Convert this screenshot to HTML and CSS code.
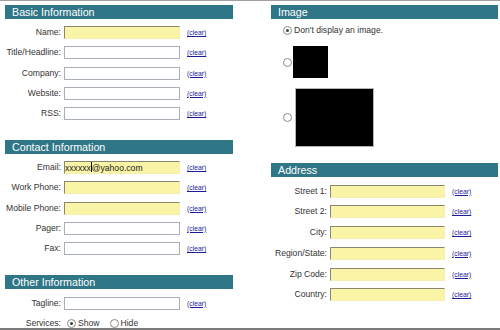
FILE: index.html
```html
<!DOCTYPE html>
<html>
<head>
<meta charset="utf-8">
<title>Edit Profile</title>
<link rel="stylesheet" href="styles.css">
</head>
<body>
<div class="page">
	<div class="col col-left">
		<div class="section">
			<div class="bar">Basic Information</div>
			<div class="fields">
				<span class="lbl">Name:</span><span class="field hl"></span><a class="clear" href="#">(clear)</a>
				<span class="lbl">Title/Headline:</span><span class="field"></span><a class="clear" href="#">(clear)</a>
				<span class="lbl">Company:</span><span class="field"></span><a class="clear" href="#">(clear)</a>
				<span class="lbl">Website:</span><span class="field"></span><a class="clear" href="#">(clear)</a>
				<span class="lbl">RSS:</span><span class="field"></span><a class="clear" href="#">(clear)</a>
			</div>
		</div>
		<div class="section next">
			<div class="bar">Contact Information</div>
			<div class="fields">
				<span class="lbl">Email:</span><span class="field hl">xxxxxx<span class="caret"></span>@yahoo.com</span><a class="clear" href="#">(clear)</a>
				<span class="lbl">Work Phone:</span><span class="field hl"></span><a class="clear" href="#">(clear)</a>
				<span class="lbl">Mobile Phone:</span><span class="field hl"></span><a class="clear" href="#">(clear)</a>
				<span class="lbl">Pager:</span><span class="field"></span><a class="clear" href="#">(clear)</a>
				<span class="lbl">Fax:</span><span class="field"></span><a class="clear" href="#">(clear)</a>
			</div>
		</div>
		<div class="section next">
			<div class="bar">Other Information</div>
			<div class="fields tight">
				<span class="lbl">Tagline:</span><span class="field"></span><a class="clear" href="#">(clear)</a>
				<span class="lbl">Services:</span>
				<span class="choices">
					<span class="radio on"></span><span class="choice">Show</span>
					<span class="radio"></span><span class="choice">Hide</span>
				</span>
			</div>
		</div>
	</div>
	<div class="col col-right">
		<div class="section">
			<div class="bar">Image</div>
			<div class="opt opt-none"><span class="radio on"></span><span class="choice">Don't display an image.</span></div>
			<div class="opt opt-small"><span class="radio"></span><span class="pic pic-small"></span></div>
			<div class="opt opt-large"><span class="radio"></span><span class="pic pic-large"></span></div>
		</div>
		<div class="section address">
			<div class="bar">Address</div>
			<div class="fields wide">
				<span class="lbl">Street 1:</span><span class="field hl"></span><a class="clear" href="#">(clear)</a>
				<span class="lbl">Street 2:</span><span class="field hl"></span><a class="clear" href="#">(clear)</a>
				<span class="lbl">City:</span><span class="field hl"></span><a class="clear" href="#">(clear)</a>
				<span class="lbl">Region/State:</span><span class="field hl"></span><a class="clear" href="#">(clear)</a>
				<span class="lbl">Zip Code:</span><span class="field hl"></span><a class="clear" href="#">(clear)</a>
				<span class="lbl">Country:</span><span class="field hl"></span><a class="clear" href="#">(clear)</a>
			</div>
		</div>
	</div>
</div>
</body>
</html>
```
FILE: styles.css
```css
body {
	margin: 0;
	background-color: #fff;
	font-family: "Liberation Sans", Arial, Helvetica, sans-serif;
	font-size: 8.6px;
	color: #333;
}

.page {
	display: flex;
	box-sizing: border-box;
	height: 330px;
	padding: 4px 0 0 5px;
	border-top: 1px solid #a0a0a0;
	border-bottom: 2px solid #7a7a7a;
}

.col-left {
	width: 228px;
}

.col-right {
	width: 227px;
	margin-left: 38px;
}

.bar {
	height: 14px;
	line-height: 14px;
	padding-left: 7px;
	background-color: #2f7686;
	color: #fff;
	font-size: 10.7px;
}

.section.next {
	margin-top: 20px;
}

/* label / input / clear rows */
.fields {
	display: grid;
	grid-template-columns: 56px 116px 1fr;
	column-gap: 3px;
	row-gap: 7.25px;
	align-items: center;
	margin-top: 7px;
}

.fields.tight {
	margin-top: 7.5px;
	row-gap: 7px;
}

.fields.wide {
	grid-template-columns: 56px 115px 1fr;
	row-gap: 7.8px;
	margin-top: 7.5px;
}

.lbl {
	text-align: right;
	white-space: nowrap;
	line-height: 13px;
}

.field {
	display: block;
	box-sizing: border-box;
	height: 13px;
	line-height: 12px;
	border: 1px solid #a8afb8;
	background-color: #fff;
	color: #222;
	white-space: nowrap;
	overflow: hidden;
}

.field.hl {
	background-color: #faf5a6;
	border-color: #8a8770 #f4efb0 #f4efb0 #8a8770;
}

.caret {
	display: inline-block;
	width: 1px;
	height: 10px;
	vertical-align: -1px;
	background-color: #000;
}

.clear {
	margin-left: 4px;
	font-size: 6.8px;
	color: #1c1c9a;
}

.choices {
	display: flex;
	align-items: center;
	grid-column: 2 / 4;
	padding-left: 3px;
}

.choice {
	margin-left: 2px;
}

.choices .choice {
	margin-right: 10px;
}

.radio {
	position: relative;
	flex: none;
	box-sizing: border-box;
	width: 9px;
	height: 9px;
	border: 1px solid #8c8c8c;
	border-radius: 50%;
	background-color: #fff;
}

.radio.on::after {
	content: "";
	position: absolute;
	left: 2px;
	top: 2px;
	width: 3px;
	height: 3px;
	border-radius: 50%;
	background-color: #2c4d2c;
}

/* image choices */
.opt {
	display: flex;
	align-items: center;
	padding-left: 12px;
}

.opt-none {
	height: 11px;
	margin-top: 5.5px;
}

.opt-small {
	margin-top: 10.5px;
}

.opt-large {
	margin-top: 10px;
}

.pic {
	display: block;
	background-color: #000;
}

.pic-small {
	width: 35px;
	height: 32px;
	margin-left: 1px;
}

.pic-large {
	width: 79px;
	height: 59px;
	margin-left: 3px;
	box-sizing: border-box;
	border: 1px solid #b4b4b4;
}

.address {
	margin-top: 16px;
}
```
